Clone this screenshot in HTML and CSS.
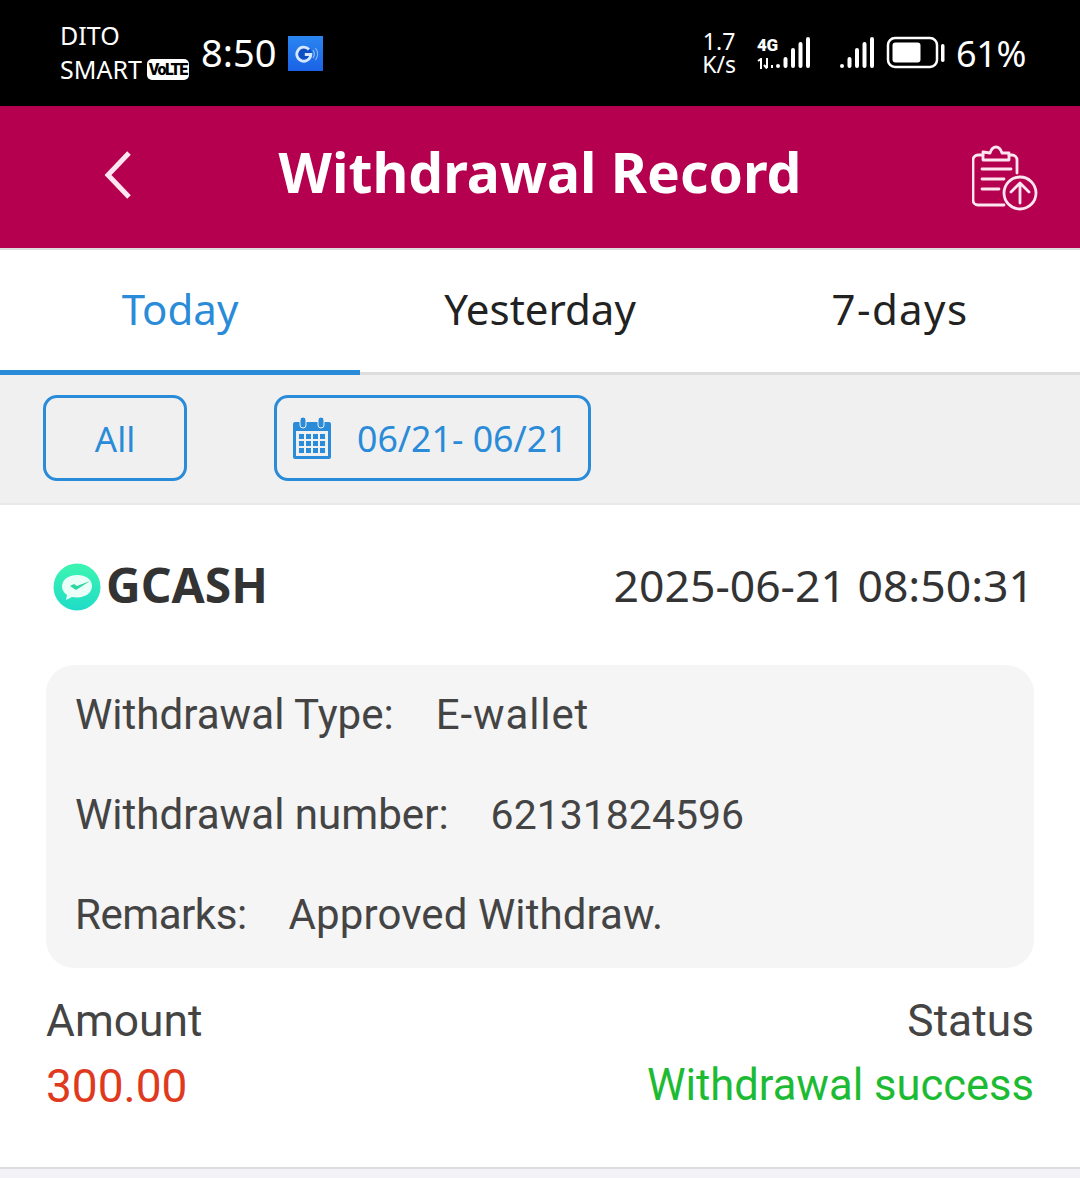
FILE: index.html
```html
<!DOCTYPE html>
<html lang="en">
<head>
<meta charset="utf-8">
<title>Withdrawal Record</title>
<link rel="stylesheet" href="styles.css">
</head>
<body>
<div class="status">
  <div class="carrier"><span>DITO</span><span class="smart">SMART<b class="volte">VoLTE</b></span></div>
  <span class="clock">8:50</span>
  <svg class="gapp" viewBox="0 0 35 35" width="35" height="35"><defs><linearGradient id="ga" x1="0" y1="0" x2="0" y2="1"><stop offset="0" stop-color="#2a86f0"/><stop offset="1" stop-color="#1a62e6"/></linearGradient></defs><rect width="35" height="35" fill="url(#ga)"/><circle cx="16" cy="18" r="8" fill="#0f4fc4"/><path d="M21 13.500a7 7 0 1 0 1.800 5h-6" fill="none" stroke="#d5e8ff" stroke-width="2.800"/><path d="M25 14a7 7 0 0 1 0 8M27.500 12a10 10 0 0 1 0 12" fill="none" stroke="#8dbaf7" stroke-width="1.200"/></svg>
  <div class="status-right">
    <div class="speed"><span>1.7</span><span>K/s</span></div>
    <div class="net">
      <span>4G</span>
      <svg viewBox="0 0 18 11" width="18" height="11"><g fill="none" stroke="#fff" stroke-width="2"><path d="M1 3l3-2v10M10 0v10M7 7l3 3.500M15 10v-3"/></g></svg>
    </div>
    <svg class="bars" viewBox="0 0 36 34" width="36" height="34"><g fill="none" stroke="#fff" stroke-width="4" stroke-linecap="round"><path d="M3 31v0M10.500 24v7M18 15v16M25.500 9v22M33 4v27"/></g></svg>
    <svg class="bars bars-2" viewBox="0 0 36 34" width="36" height="34"><g fill="none" stroke="#fff" stroke-width="4" stroke-linecap="round"><path d="M3 31v0M10.500 24v7M18 15v16M25.500 9v22M33 4v27"/></g></svg>
    <svg class="batt" viewBox="0 0 60 34" width="60" height="34"><rect x="2" y="2" width="49" height="29" rx="7" fill="none" stroke="#fff" stroke-width="2.500"/><rect x="6.500" y="6.500" width="28" height="20" rx="3" fill="#fff"/><rect x="55" y="8" width="3.500" height="18" rx="1.700" fill="#fff"/></svg>
    <span class="pct">61%</span>
  </div>
</div>

<header class="head">
  <svg class="back" viewBox="0 0 32 48" width="32" height="48"><path d="M27 2L6 24l21 22" fill="none" stroke="#fde6f0" stroke-width="5"/></svg>
  <h1>Withdrawal Record</h1>
  <svg class="upload" viewBox="0 0 66 66" width="66" height="66"><g fill="none" stroke="#fde6f0" stroke-width="2.800" stroke-linecap="round" stroke-linejoin="round"><path d="M11 10H6a5 5 0 0 0-5 5v40a5 5 0 0 0 5 5h26"/><path d="M37 10h3a5 5 0 0 1 5 5v13"/><path d="M11 7v8h26V8h-7c-1-3-3-6-6-6s-5 3-6 6z"/><path d="M10 24h29M10 34h22M10 44h17"/><circle cx="48" cy="48" r="16"/><path d="M48 58V39M39 47l9-9 9 9"/></g></svg>
</header>

<nav class="tabs">
  <div class="tab active">Today</div>
  <div class="tab">Yesterday</div>
  <div class="tab tab-wide">7-days</div>
</nav>

<div class="filters">
  <div class="btn btn-all">All</div>
  <div class="btn btn-date">
    <svg viewBox="0 0 40 44" width="40" height="44"><path d="M3 6h34a2 2 0 0 1 2 2v33a2 2 0 0 1-2 2H3a2 2 0 0 1-2-2V8a2 2 0 0 1 2-2z" fill="#2a8bd8"/><rect x="4" y="15" width="32" height="25" fill="#f0f0f0"/><rect x="8" y="1" width="6" height="11" rx="3" fill="#2a8bd8" stroke="#f0f0f0"/><rect x="26" y="1" width="6" height="11" rx="3" fill="#2a8bd8" stroke="#f0f0f0"/><g fill="#2a8bd8"><rect x="7" y="18" width="5" height="5"/><rect x="14" y="18" width="5" height="5"/><rect x="21" y="18" width="5" height="5"/><rect x="28" y="18" width="5" height="5"/><rect x="7" y="25" width="5" height="5"/><rect x="14" y="25" width="5" height="5"/><rect x="21" y="25" width="5" height="5"/><rect x="28" y="25" width="5" height="5"/><rect x="7" y="32" width="5" height="5"/><rect x="14" y="32" width="5" height="5"/><rect x="21" y="32" width="5" height="5"/><rect x="28" y="32" width="5" height="5"/></g></svg>
    <span>06/21- 06/21</span>
  </div>
</div>

<main class="record">
  <div class="record-top">
    <div class="brand">
      <svg viewBox="0 0 48 48" width="48" height="48"><defs><linearGradient id="g" x1="0" y1="0" x2="0" y2="1"><stop offset="0" stop-color="#3df5b0"/><stop offset="1" stop-color="#1fdcc8"/></linearGradient></defs><circle cx="24" cy="24" r="23.500" fill="url(#g)"/><path d="M24 12c-9 0-15 5-15 11.500 0 3.500 2 6.500 5 8.500l-1 5 6-3c1.500.3 3 .5 5 .5 9 0 15-5 15-11.500S33 12 24 12z" fill="#e9fff8"/><path d="M17 23l6 4 14-9-13 5-3-2z" fill="#2bd6a0"/></svg>
      <span>GCASH</span>
    </div>
    <time>2025-06-21 08:50:31</time>
  </div>
  <div class="details">
    <div class="row"><span>Withdrawal Type:</span><span class="val val-spaced">E-wallet</span></div>
    <div class="row"><span>Withdrawal number:</span><span class="val val-num">62131824596</span></div>
    <div class="row"><span class="label-short">Remarks:</span><span class="val val-long">Approved Withdraw.</span></div>
  </div>
  <div class="summary">
    <div class="cell"><span>Amount</span><strong class="amount">300.00</strong></div>
    <div class="cell cell-end"><span>Status</span><strong class="state">Withdrawal success</strong></div>
  </div>
</main>
</body>
</html>
```
FILE: styles.css
```css
* { box-sizing: border-box; }
html, body { margin: 0; padding: 0; background: #f3f3f7; }
body { width: 1080px; height: 1178px; overflow: hidden; font-family: "Noto Sans", "Liberation Sans", sans-serif; color: #333; }

.status { height: 106px; background: #000; color: #fff; display: flex; align-items: center; padding: 0 54px 0 60px; }
.carrier { display: flex; flex-direction: column; font-size: 25px; line-height: 34px; width: 141px; margin-top: -2px; }
.smart { display: flex; align-items: center; white-space: nowrap; }
.volte { background: #fff; color: #000; font-family: "Roboto", sans-serif; font-size: 16px; line-height: 21px; border-radius: 5px; padding: 0 2px; margin-left: 5px; font-weight: 900; letter-spacing: -1.500px; }
.clock { font-size: 38px; width: 87px; margin-top: -2px; }
.gapp { display: block; }
.status-right { margin-left: auto; display: flex; align-items: center; }
.speed { display: flex; flex-direction: column; font-size: 23px; line-height: 23px; align-items: center; width: 36px; }
.net { display: flex; flex-direction: column; align-items: flex-start; gap: 5px; font-family: "Roboto", sans-serif; font-size: 17px; line-height: 15px; font-weight: 900; letter-spacing: -0.500px; margin-left: 20px; width: 18px; }
.net svg { display: block; }
.bars { display: block; margin-top: -2px; }
.bars-2 { margin-left: 28px; margin-right: 11px; }
.pct { font-size: 36px; margin-left: 10px; letter-spacing: -0.400px; }

.head { height: 144px; background: #b4004e; border-bottom: 2px solid #ddd; display: flex; align-items: center; justify-content: space-between; padding: 0 42px 0 102px; color: #fff; }
.head h1 { margin: 0 26px 10px 0; font-size: 55.200px; font-weight: 700; line-height: 1; }
.back { display: block; margin-bottom: 5px; }
.upload { display: block; margin-top: 2px; }

.tabs { height: 125px; display: flex; border-bottom: 3px solid #ddd; background: #fff; }
.tab { flex: 1; display: flex; align-items: center; justify-content: center; font-size: 42px; color: #222; margin-bottom: -3px; padding-bottom: 4px; border-bottom: 5px solid transparent; }
.tab.active { color: #2a8bd8; border-bottom-color: #2a8bd8; }
.tab-wide { letter-spacing: 1.400px; }

.filters { height: 130px; background: #f0f0f0; border-bottom: 2px solid #e8e8e8; display: flex; align-items: center; gap: 87px; padding: 0 0 2px 43px; }
.btn { height: 86px; border: 3px solid #2a8bd8; border-radius: 14px; color: #2a8bd8; display: flex; align-items: center; justify-content: center; font-size: 35px; }
.btn-all { width: 144px; }
.btn-date { width: 317px; gap: 25px; justify-content: flex-start; padding-left: 15px; font-size: 35.700px; }
.btn-date svg { display: block; }

.record { height: 664px; border-bottom: 2px solid #ddd; padding: 0 46px; background: #fff; }
.record-top { height: 160px; display: flex; align-items: center; justify-content: space-between; padding: 0 0 0 7px; }
.brand { display: flex; align-items: center; gap: 5px; font-size: 48px; font-weight: 700; line-height: 1; }
.brand svg { display: block; margin-top: 4px; }
.record-top time { font-size: 44.500px; margin-bottom: 2px; }
.details { height: 303px; background: #f5f5f5; border-radius: 28px; padding: 0 29px 4px; display: flex; flex-direction: column; justify-content: center; font-family: "Roboto", sans-serif; font-size: 42.100px; color: #444; }
.row { height: 100.500px; display: flex; align-items: center; gap: 42px; }
.val { font-size: 42px; }
.val-spaced { letter-spacing: 0.900px; }
.val-num { font-size: 41px; }
.val-long { letter-spacing: 0.100px; }
.label-short { letter-spacing: -0.500px; }
.summary { display: flex; justify-content: space-between; padding-top: 23px; font-family: "Roboto", sans-serif; font-size: 44.300px; color: #444; }
.cell { display: flex; flex-direction: column; gap: 5px; line-height: 60px; }
.cell-end { align-items: flex-end; }
.cell strong { font-weight: 400; }
.amount { color: #e03a1e; font-size: 46px; }
.state { color: #1cbb33; font-size: 43.500px; }
```
